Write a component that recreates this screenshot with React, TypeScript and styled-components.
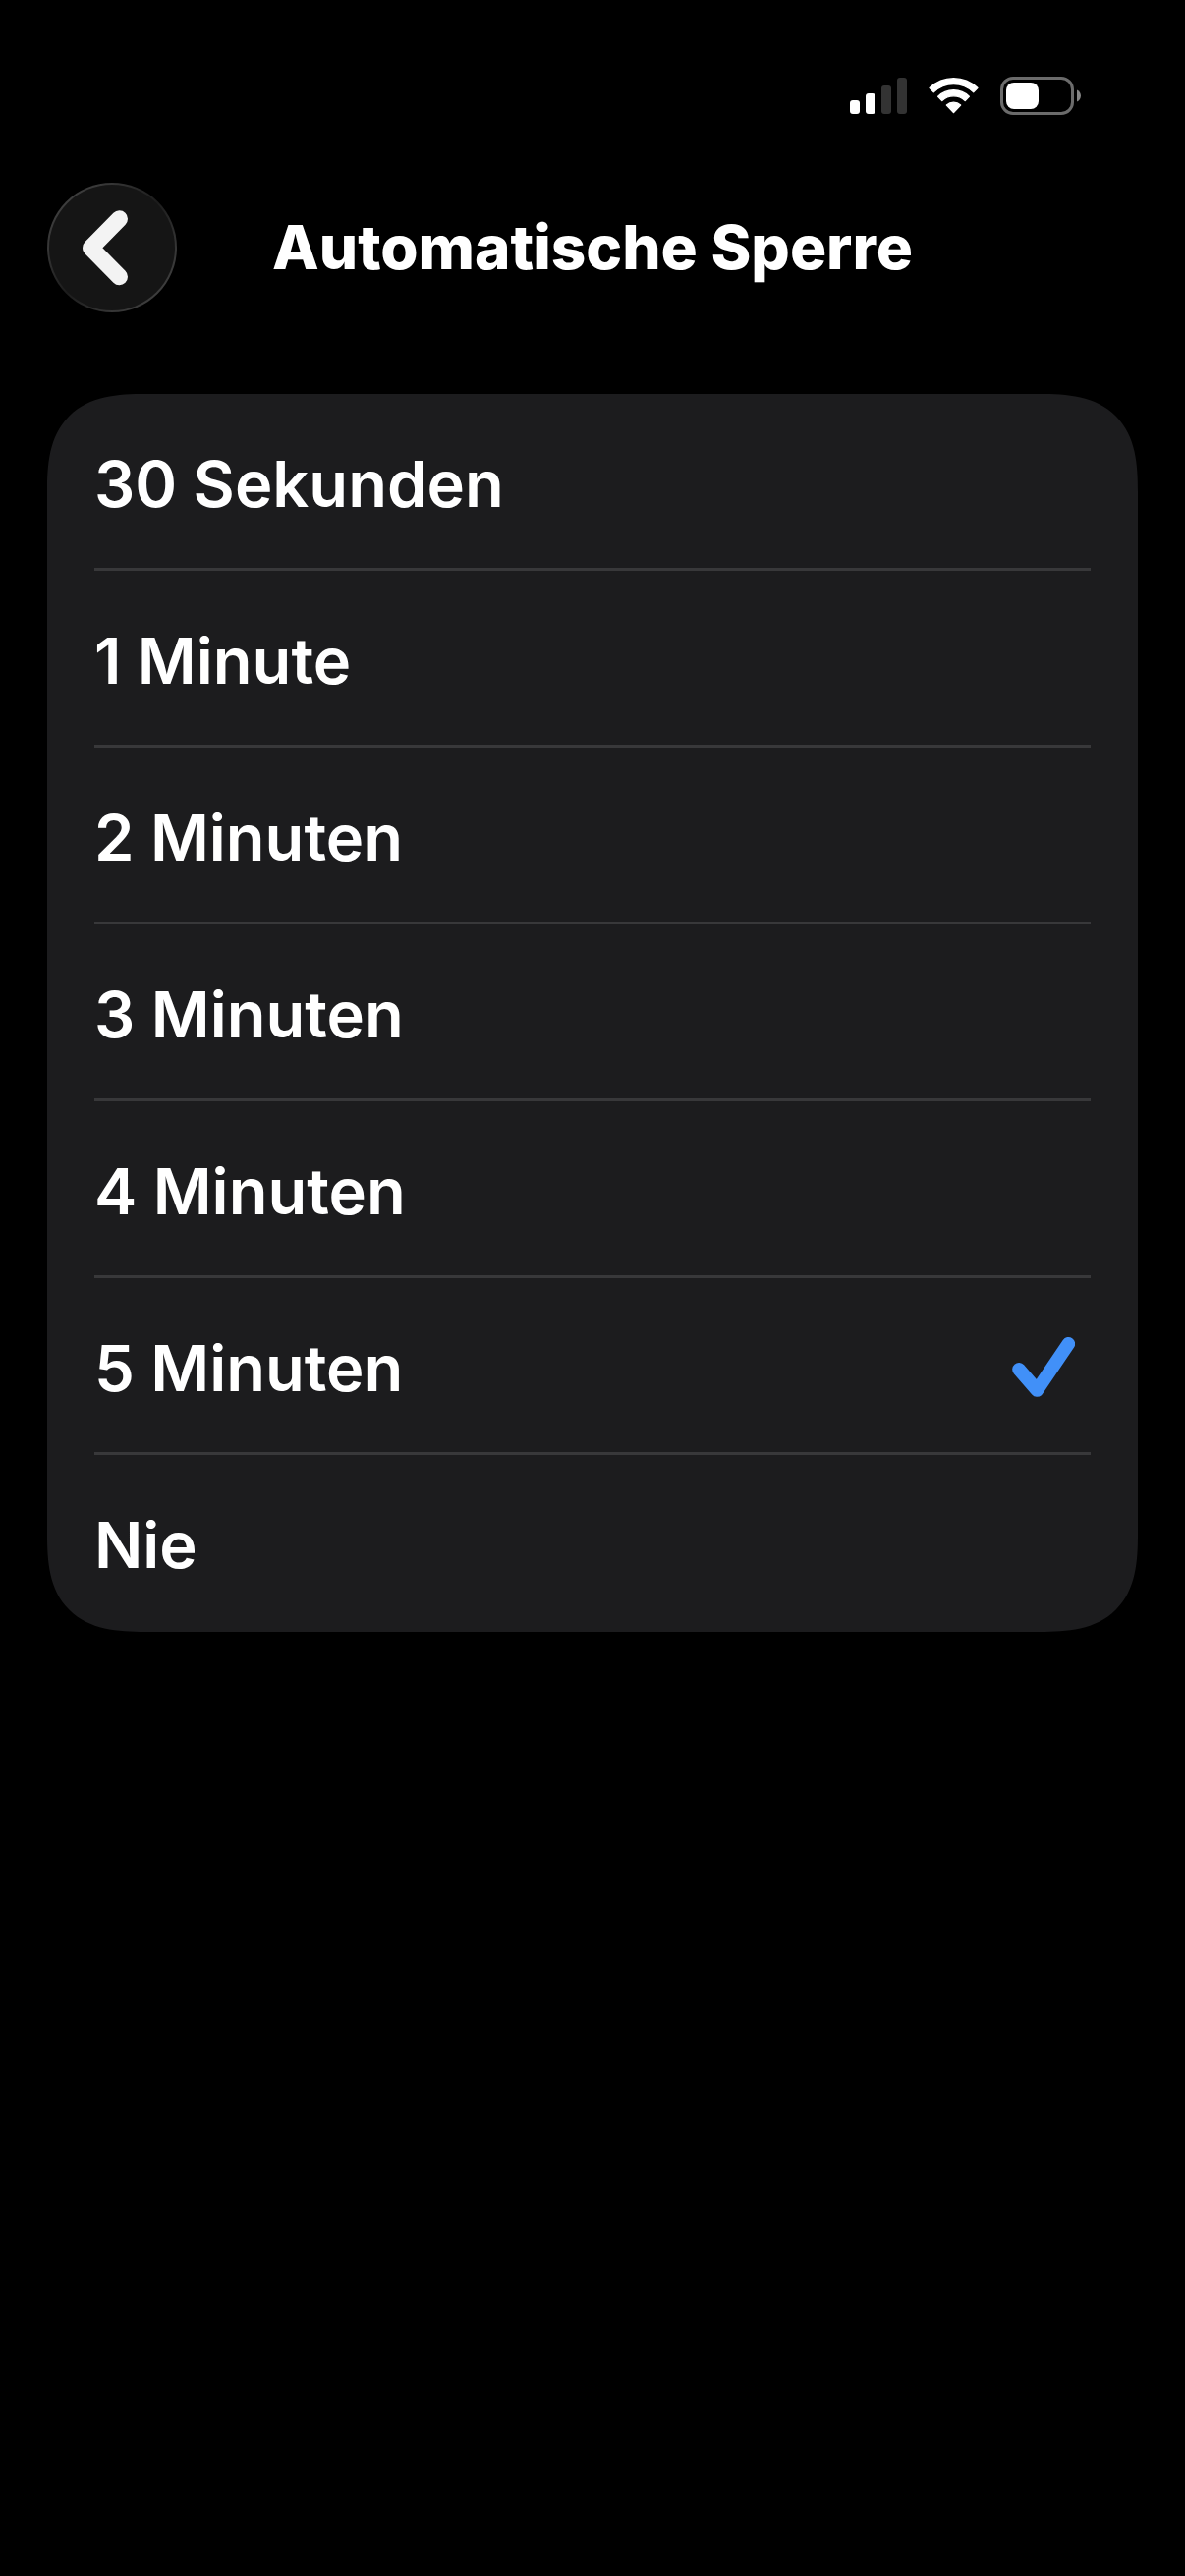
import React, { useState } from 'react';
import styled, { createGlobalStyle } from 'styled-components';

const GlobalStyle = createGlobalStyle`
  *, *::before, *::after { box-sizing: border-box; }
  html { background: #000; }
  body {
    margin: 0;
    background: #000;
    color: #fff;
    font-family: Inter, "Liberation Sans", sans-serif;
    -webkit-font-smoothing: antialiased;
  }
`;

const Screen = styled.div`
  display: flex;
  flex-direction: column;
  min-height: 100vh;
  padding: 0 48px;
`;

const StatusBar = styled.div`
  display: flex;
  justify-content: flex-end;
  align-items: center;
  gap: 21px;
  padding: 78px 58px 69px 0;

  svg { display: block; }
`;

const Header = styled.header`
  display: grid;
  grid-template-columns: 132px 1fr 132px;
  align-items: center;
  margin-bottom: 83px;
`;

const BackButton = styled.button`
  display: flex;
  align-items: center;
  justify-content: center;
  width: 132px;
  height: 132px;
  padding: 0;
  border: 2px solid transparent;
  border-radius: 50%;
  background:
    linear-gradient(#151515, #151515) padding-box,
    linear-gradient(135deg, #464646 0%, #363636 25%, #1c1c1c 50%, #363636 75%, #464646 100%) border-box;
  cursor: pointer;
`;

const Title = styled.h1`
  margin: 0;
  font-size: 62px;
  line-height: 76px;
  font-weight: 800;
  text-align: center;
  white-space: nowrap;
`;

const OptionList = styled.fieldset`
  min-width: 0;
  margin: 0;
  padding: 0 48px;
  border: 0;
  border-radius: 78px;
  background: #1c1c1e;

  @supports (corner-shape: superellipse(1.45)) {
    border-radius: 100px;
    corner-shape: superellipse(1.45);
  }
`;

const Option = styled.label`
  display: flex;
  align-items: center;
  justify-content: space-between;
  height: 180px;
  padding-right: 16px;
  font-size: 65px;
  line-height: 80px;
  font-weight: 600;
  cursor: pointer;

  &:not(:last-child) {
    box-shadow: inset 0 -3px #38383a;
  }
`;

const Radio = styled.input`
  appearance: none;
  width: 0;
  height: 0;
  margin: 0;
  outline: none;
`;

const OptionText = styled.span`
  flex: 1;
  padding-top: 4px;
`;

const SignalIcon = () => (
  <svg width="58" height="39" viewBox="0 0 58 39" aria-hidden="true">
    <rect x="0" y="24" width="10" height="14" rx="3" fill="#fff" />
    <rect x="16" y="17" width="10" height="21" rx="3" fill="#fff" />
    <rect x="32" y="9" width="10" height="29" rx="3" fill="#333" />
    <rect x="48" y="1" width="10" height="37" rx="3" fill="#333" />
  </svg>
);

const WifiIcon = () => (
  <svg width="53" height="39" viewBox="0 0 53 39" aria-hidden="true">
    <g
      transform="translate(0.5 0)"
      fill="#fff"
      stroke="#fff"
      strokeWidth="1.4"
      strokeLinejoin="round"
    >
      <path d="M1.6 11.6 A35 35 0 0 1 50.4 11.6 L46.2 15.8 A29 29 0 0 0 5.8 15.8 Z" />
      <path d="M10.2 20.3 A22.5 22.5 0 0 1 41.8 20.3 L37.7 24.5 A17 17 0 0 0 14.3 24.5 Z" />
      <path d="M18.9 29 A10.3 10.3 0 0 1 33.1 29 L26 36.6 Z" />
    </g>
  </svg>
);

const BatteryIcon = () => (
  <svg width="82" height="39" viewBox="0 0 82 39" aria-hidden="true">
    <rect x="1.5" y="1.5" width="72" height="36" rx="11.5" fill="none" stroke="#6b6b6b" strokeWidth="3" />
    <rect x="6" y="6" width="33" height="27" rx="8" fill="#fff" />
    <path d="M78 13.5 C83.3 15.6 83.3 23.4 78 25.5 Z" fill="#858585" />
  </svg>
);

const BackIcon = () => (
  <svg width="60" height="80" viewBox="0 0 60 80" aria-hidden="true">
    <path
      d="M37.5 10.8 L8.5 40.3 L37.5 69.8"
      fill="none"
      stroke="#f3f3f3"
      strokeWidth="17"
      strokeLinecap="round"
      strokeLinejoin="round"
    />
  </svg>
);

const CheckIcon = () => (
  <svg width="64" height="62" viewBox="0 0 64 62" aria-hidden="true">
    <path
      d="M7 33.8 L25.4 55 L57.4 7.8"
      fill="none"
      stroke="#4190f8"
      strokeWidth="13.6"
      strokeLinecap="round"
      strokeLinejoin="round"
    />
  </svg>
);

const OPTIONS = [
  '30 Sekunden',
  '1 Minute',
  '2 Minuten',
  '3 Minuten',
  '4 Minuten',
  '5 Minuten',
  'Nie',
];

export default function App() {
  const [selected, setSelected] = useState('5 Minuten');

  return (
    <>
      <GlobalStyle />
      <Screen>
        <StatusBar>
          <SignalIcon />
          <WifiIcon />
          <BatteryIcon />
        </StatusBar>
        <Header>
          <BackButton type="button" aria-label="Zurück">
            <BackIcon />
          </BackButton>
          <Title id="title">Automatische Sperre</Title>
        </Header>
        <main>
          <OptionList aria-labelledby="title">
            {OPTIONS.map((option) => (
              <Option key={option}>
                <Radio
                  type="radio"
                  name="auto-lock"
                  value={option}
                  checked={option === selected}
                  onChange={() => setSelected(option)}
                />
                <OptionText>{option}</OptionText>
                {option === selected && <CheckIcon />}
              </Option>
            ))}
          </OptionList>
        </main>
      </Screen>
    </>
  );
}
